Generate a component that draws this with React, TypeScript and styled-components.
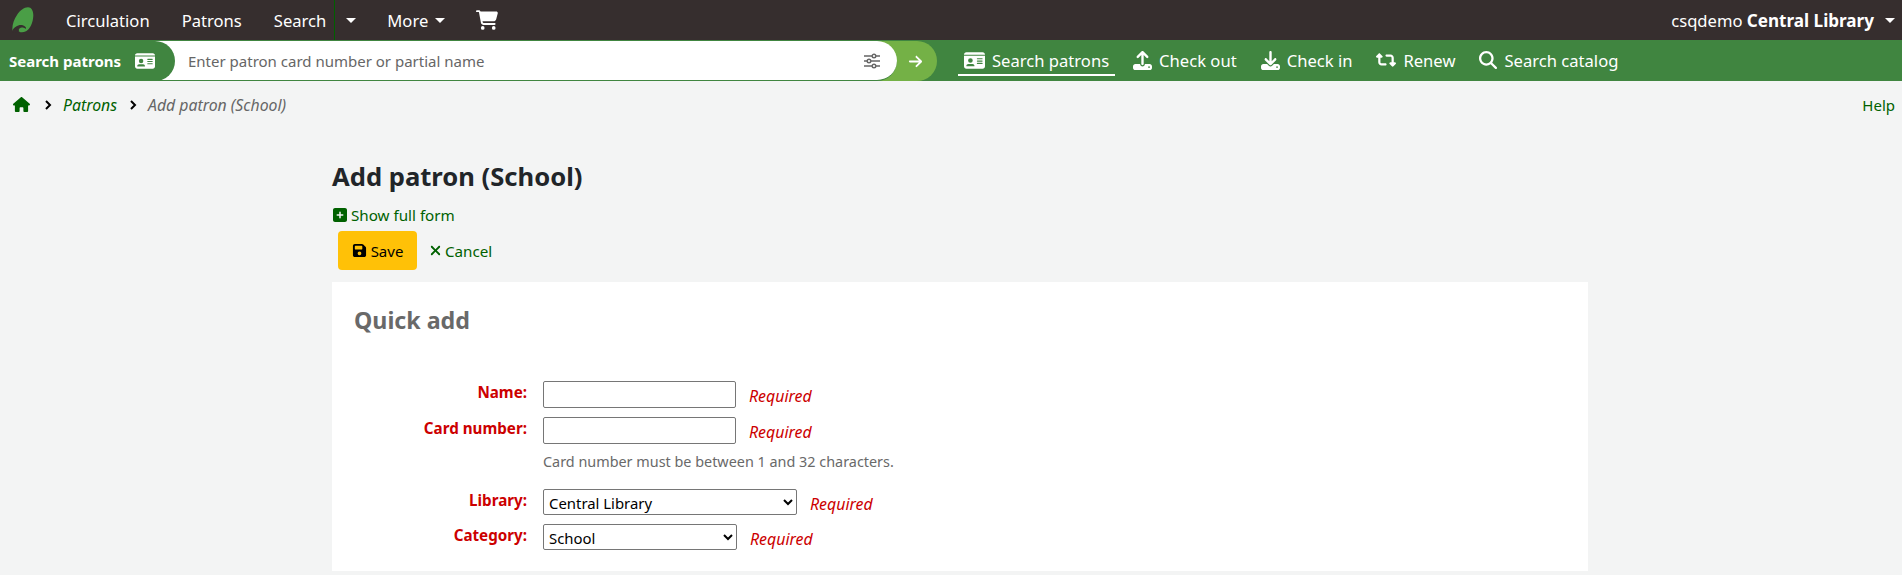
import React from 'react';
import styled, { createGlobalStyle } from 'styled-components';
import {
  FaHouse,
  FaIdCard,
  FaUpload,
  FaDownload,
  FaRetweet,
  FaMagnifyingGlass,
  FaSquarePlus,
  FaFloppyDisk,
  FaXmark,
  FaCartShopping,
  FaArrowRight,
} from 'react-icons/fa6';

const GlobalStyle = createGlobalStyle`
  html, body {
    margin: 0;
    padding: 0;
    background: #f3f4f4;
    font-family: "Noto Sans", sans-serif;
    font-size: 15px;
    color: #212529;
    overflow: hidden;
  }
`;

const Page = styled.div`
  width: 1902px;
  height: 575px;
  overflow: hidden;
`;

// Top navigation
const TopBar = styled.nav`
  height: 40px;
  background: #362e2e;
  border-bottom: 1px solid #408540;
  display: flex;
  align-items: center;
  padding-left: 12px;
  color: #fff;
`;

const LogoMark = styled.svg`
  width: 22px;
  height: 26px;
  margin-right: 32px;
`;

const NavLink = styled.a<{ $gap?: number; $indent?: number }>`
  font-size: 16.6px;
  color: #fff;
  margin-left: ${props => props.$indent ?? 0}px;
  margin-right: ${props => props.$gap ?? 0}px;
  display: flex;
  align-items: center;
  gap: 7px;
`;

const Caret = styled.span`
  display: inline-block;
  width: 0;
  height: 0;
  border-left: 5.5px solid transparent;
  border-right: 5.5px solid transparent;
  border-top: 5.5px solid #fff;
`;

const SplitDivider = styled.div`
  width: 1px;
  height: 40px;
  background: #006100;
  margin: 0 11px 0 8px;
`;

const UserMenu = styled.div`
  margin-left: auto;
  display: flex;
  align-items: center;
  gap: 11px;
  padding-right: 7px;
  font-size: 16.6px;

  strong {
    font-size: 17.1px;
    font-weight: 700;
  }
`;

// Search bar
const SearchBar = styled.div`
  height: 40px;
  background: #408540;
  display: flex;
  align-items: stretch;
`;

const SearchField = styled.div`
  display: flex;
  width: 937px;
  background: #74b146;
  border-radius: 0 22px 22px 0;
`;

const SearchTab = styled.div`
  width: 175px;
  background: #408540;
  border-radius: 0 20px 20px 0;
  display: flex;
  align-items: center;
  gap: 14px;
  padding-left: 9px;
  box-sizing: border-box;
  color: #fff;
  font-size: 15px;
  font-weight: 700;
  z-index: 1;
`;

const SearchInputWrap = styled.div`
  width: 742px;
  margin-left: -20px;
  padding-left: 33px;
  box-sizing: border-box;
  background: #fff;
  border-radius: 0 20px 20px 0;
  border-bottom: 1px solid #408540;
  display: flex;
  align-items: center;
  justify-content: space-between;
  padding-right: 16px;
  color: #666;
  font-size: 15px;
`;

const SearchSubmit = styled.div`
  flex: 1;
  display: flex;
  align-items: center;
  padding-left: 11px;
  color: #fff;
`;

const QuickLinks = styled.div`
  display: flex;
  align-items: center;
  margin-left: 21px;
  gap: 24px;
`;

const QuickLink = styled.a<{ $active?: boolean }>`
  display: flex;
  align-items: center;
  gap: 7px;
  color: #fff;
  font-size: 16.6px;
  height: 30px;
  padding: 0 ${props => (props.$active ? '6px' : '0')} 0 ${props => (props.$active ? '6px' : '0')};
  margin-right: ${props => (props.$active ? '-6px' : '0')};
  border-bottom: 2px solid ${props => (props.$active ? '#fff' : 'transparent')};
  box-sizing: border-box;
`;

// Breadcrumb
const Breadcrumbs = styled.div`
  height: 47px;
  padding: 0 7px 0 13px;
  display: flex;
  align-items: center;
  font-size: 15.8px;
  color: #666;
`;

const HomeCrumb = styled.a`
  display: flex;
  color: #006100;
  margin-right: 2px;
`;

const Crumb = styled.a`
  color: #006100;
  font-style: italic;
`;

const CrumbCurrent = styled.span`
  font-style: italic;
  color: #666;
`;

const CrumbSeparator = styled.svg`
  width: 7px;
  height: 10px;
  margin: 0 11px 0 13px;
`;

const HelpLink = styled.a`
  margin-left: auto;
  color: #006100;
  font-size: 15px;
`;

// Main content
const Main = styled.main`
  width: 1256px;
  margin-left: 332px;
`;

const Title = styled.h1`
  margin: 32px 0 0;
  font-size: 25.6px;
  line-height: 34px;
  font-weight: 700;
  color: #212529;
`;

const ShowFull = styled.a`
  display: flex;
  align-items: center;
  gap: 3px;
  margin-top: 11px;
  height: 20px;
  color: #006100;
  font-size: 15.2px;
`;

const Actions = styled.div`
  display: flex;
  align-items: center;
  margin: 6px 0 12px 6px;
  gap: 11px;
`;

const SaveButton = styled.button`
  width: 79px;
  height: 39px;
  background: #ffc107;
  border: none;
  border-radius: 4px;
  color: #000;
  font-family: inherit;
  font-size: 15px;
  display: flex;
  align-items: center;
  justify-content: center;
  gap: 4px;
  padding: 0;
`;

const CancelLink = styled.a`
  display: flex;
  align-items: center;
  gap: 2px;
  color: #006100;
  font-size: 15.2px;
`;

const Panel = styled.section`
  background: #fff;
  height: 289px;
  padding: 24px 22px 0;
  box-sizing: border-box;
`;

const PanelTitle = styled.h2`
  margin: 0 0 47px;
  font-size: 23.2px;
  line-height: 28px;
  font-weight: 700;
  color: #696969;
`;

const FieldList = styled.ol`
  list-style: none;
  margin: 0;
  padding: 0;
`;

const FieldRow = styled.li<{ $hinted?: boolean }>`
  display: grid;
  grid-template-columns: 173px auto auto 1fr;
  column-gap: 16px;
  align-items: start;
  margin-bottom: ${props => (props.$hinted ? 17 : 9)}px;
`;

const FieldLabel = styled.label`
  text-align: right;
  color: #cc0000;
  font-weight: 700;
  font-size: 15.2px;
  line-height: 20px;
  margin-top: 1px;
`;

const TextInput = styled.input`
  width: 193px;
  height: 27px;
  box-sizing: border-box;
  border: 1px solid #767676;
  border-radius: 2px;
  padding: 1px 2px;
  background: #fff;
`;

const SelectInput = styled.select<{ $width: number }>`
  width: ${props => props.$width}px;
  height: 26px;
  box-sizing: border-box;
  border: 1px solid #767676;
  border-radius: 2px;
  padding: 2px 0 0 1px;
  background: #fff;
  color: #000;
  font-family: inherit;
  font-size: 14.9px;
`;

const RequiredNote = styled.span`
  color: #cc0000;
  font-style: italic;
  font-size: 15.9px;
  line-height: 20px;
  margin-top: 5px;
  margin-left: -3px;
`;

const Hint = styled.div`
  grid-column: 2 / 5;
  margin-top: 8px;
  color: #696969;
  font-size: 14.4px;
  line-height: 20px;
`;

const App: React.FC = () => {
  return (
    <Page>
      <GlobalStyle />
      <TopBar>
        <LogoMark viewBox="0 0 22 26">
          <path
            d="M16 .3C19.5.3 21.5 4 21.3 9C21 16 18 22 14 24.2C11 25.8 7.5 25.4 6 24C4 24 1.5 24 .6 25C-.3 19 1.5 13 5 8C8 3.5 12 .3 16 .3Z"
            fill="#4a9e46"
          />
          <path
            d="M0 24C2 20 6 17.5 10 18C13 18.5 14.5 20.5 14 22C12 20.5 9 20 7.5 21.5C6.5 22.5 6.5 23.5 7.5 24.5L0 26Z"
            fill="#362e2e"
          />
        </LogoMark>
        <NavLink $gap={32}>Circulation</NavLink>
        <NavLink $gap={32}>Patrons</NavLink>
        <NavLink>Search</NavLink>
        <SplitDivider />
        <Caret />
        <NavLink $gap={31} $indent={31}>
          More <Caret />
        </NavLink>
        <FaCartShopping size={22} />
        <UserMenu>
          <span>
            csqdemo <strong>Central Library</strong>
          </span>
          <Caret />
        </UserMenu>
      </TopBar>
      <SearchBar>
        <SearchField>
          <SearchTab>
            Search patrons <FaIdCard size={20} />
          </SearchTab>
          <SearchInputWrap>
            Enter patron card number or partial name
            <svg width="18" height="16" viewBox="0 0 18 16" fill="none" stroke="#666" strokeWidth="1.4">
              <path d="M1 3h16M1 8h16M1 13h16" />
              <circle cx="11" cy="3" r="1.8" fill="#fff" />
              <circle cx="6" cy="8" r="1.8" fill="#fff" />
              <circle cx="11" cy="13" r="1.8" fill="#fff" />
            </svg>
          </SearchInputWrap>
          <SearchSubmit>
            <FaArrowRight size={15} />
          </SearchSubmit>
        </SearchField>
        <QuickLinks>
          <QuickLink $active>
            <FaIdCard size={21} /> Search patrons
          </QuickLink>
          <QuickLink>
            <FaUpload size={19} /> Check out
          </QuickLink>
          <QuickLink>
            <FaDownload size={19} /> Check in
          </QuickLink>
          <QuickLink>
            <FaRetweet size={20} /> Renew
          </QuickLink>
          <QuickLink>
            <FaMagnifyingGlass size={18} /> Search catalog
          </QuickLink>
        </QuickLinks>
      </SearchBar>
      <Breadcrumbs>
        <HomeCrumb>
          <FaHouse size={17} />
        </HomeCrumb>
        <CrumbSeparator viewBox="0 0 7 10">
          <path d="M1 1l4 4-4 4" fill="none" stroke="#000" strokeWidth="2" />
        </CrumbSeparator>
        <Crumb>Patrons</Crumb>
        <CrumbSeparator viewBox="0 0 7 10">
          <path d="M1 1l4 4-4 4" fill="none" stroke="#000" strokeWidth="2" />
        </CrumbSeparator>
        <CrumbCurrent>Add patron (School)</CrumbCurrent>
        <HelpLink>Help</HelpLink>
      </Breadcrumbs>
      <Main>
        <Title>Add patron (School)</Title>
        <ShowFull>
          <FaSquarePlus size={16} /> Show full form
        </ShowFull>
        <Actions>
          <SaveButton>
            <FaFloppyDisk size={15} /> Save
          </SaveButton>
          <CancelLink>
            <FaXmark size={15} /> Cancel
          </CancelLink>
        </Actions>
        <Panel>
          <PanelTitle>Quick add</PanelTitle>
          <FieldList>
            <FieldRow>
              <FieldLabel>Name:</FieldLabel>
              <TextInput type="text" />
              <RequiredNote>Required</RequiredNote>
            </FieldRow>
            <FieldRow $hinted>
              <FieldLabel>Card number:</FieldLabel>
              <TextInput type="text" />
              <RequiredNote>Required</RequiredNote>
              <Hint>Card number must be between 1 and 32 characters.</Hint>
            </FieldRow>
            <FieldRow>
              <FieldLabel>Library:</FieldLabel>
              <SelectInput $width={254} defaultValue="Central Library">
                <option>Central Library</option>
              </SelectInput>
              <RequiredNote>Required</RequiredNote>
            </FieldRow>
            <FieldRow>
              <FieldLabel>Category:</FieldLabel>
              <SelectInput $width={194} defaultValue="School">
                <option>School</option>
              </SelectInput>
              <RequiredNote>Required</RequiredNote>
            </FieldRow>
          </FieldList>
        </Panel>
      </Main>
    </Page>
  );
};

export default App;
